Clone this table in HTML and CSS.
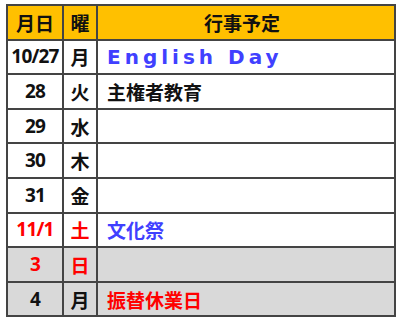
FILE: index.html
```html
<!DOCTYPE html>
<html lang="ja">
<head>
<meta charset="utf-8">
<link rel="stylesheet" href="styles.css">
</head>
<body>
<table class="sched">
  <colgroup>
    <col class="c-date"><col class="c-dow"><col class="c-ev">
  </colgroup>
  <thead>
    <tr class="head">
      <th>月日</th><th>曜</th><th class="ev-head">行事予定</th>
    </tr>
  </thead>
  <tbody>
    <tr><td class="date">10/27</td><td class="dow">月</td><td class="ev blue en">English Day</td></tr>
    <tr><td class="date">28</td><td class="dow">火</td><td class="ev">主権者教育</td></tr>
    <tr><td class="date">29</td><td class="dow">水</td><td class="ev"></td></tr>
    <tr><td class="date">30</td><td class="dow">木</td><td class="ev"></td></tr>
    <tr><td class="date">31</td><td class="dow">金</td><td class="ev"></td></tr>
    <tr><td class="date red">11/1</td><td class="dow red">土</td><td class="ev blue">文化祭</td></tr>
    <tr class="hol"><td class="date red">3</td><td class="dow red">日</td><td class="ev"></td></tr>
    <tr class="hol"><td class="date">4</td><td class="dow">月</td><td class="ev red">振替休業日</td></tr>
  </tbody>
</table>
</body>
</html>
```
FILE: styles.css
```css
html, body {
  margin: 0;
  padding: 0;
  background: #ffffff;
}
body {
  padding: 4px 0 0 6px;
  font-family: "Noto Sans CJK JP", "Noto Sans", sans-serif;
  font-weight: 700;
  font-size: 19px;
  color: #111111;
}
.sched {
  border-collapse: collapse;
  width: 390px;
  border: 2px solid #333333;
  table-layout: fixed;
}
.c-date { width: 56px; }
.c-dow { width: 34px; }
.sched th, .sched td {
  border: 2px solid #444444;
  height: 32.6px;
  padding: 0;
  line-height: 1;
  text-align: center;
  font-weight: 700;
}
.sched td.date {
  font-family: "Noto Sans", sans-serif;
  font-size: 19px;
  letter-spacing: -0.8px;
}
.head th {
  background: #ffc000;
  font-weight: 700;
}
.sched td.ev {
  text-align: left;
  padding-left: 9px;
}
.sched th.ev-head {
  text-align: left;
  padding-left: 106px;
}
.hol td { background: #d9d9d9; }
.red { color: #ff0000; }
.blue { color: #4040ff; }
.sched td.en {
  font-family: "DejaVu Sans", sans-serif;
  font-size: 20px;
  letter-spacing: 4px;
}
```
